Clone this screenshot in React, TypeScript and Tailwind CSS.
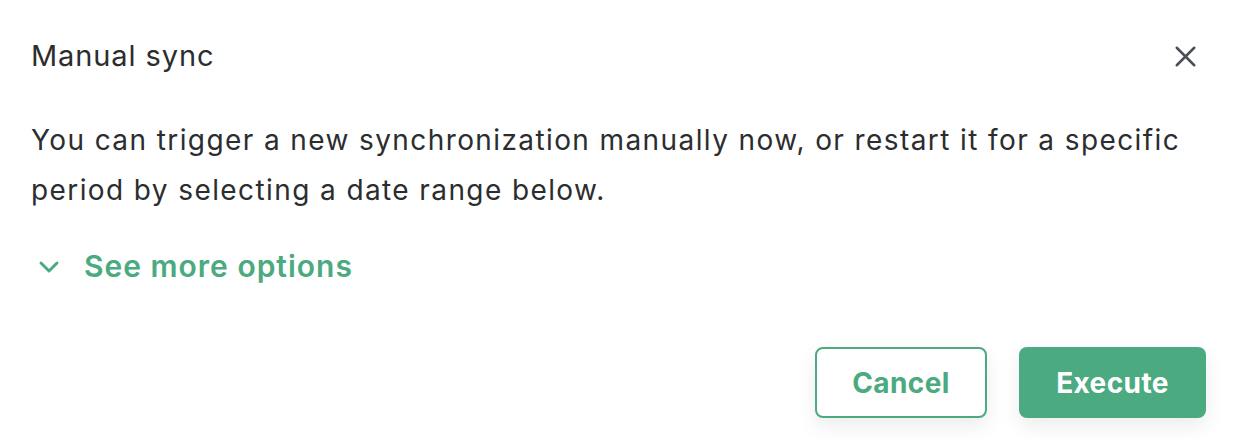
import { X, ChevronDown } from 'lucide-react';

export default function App() {
  return (
    <div className="w-[1234px] h-[448px] bg-white text-[#2b2d2f] font-['Inter',sans-serif]">
      <div className="pl-[31px] pr-[28px] pt-[36px]">
        {/* Header */}
        <div className="flex items-center justify-between h-[40px]">
          <h2 className="text-[29px] font-normal tracking-[0.9px]">Manual sync</h2>
          <button className="w-[40px] h-[40px] flex items-center justify-center text-[#4a4f55] mr-[1px]">
            <X size={35} strokeWidth={1.7} />
          </button>
        </div>

        {/* Description */}
        <p className="mt-[39px] text-[28px] leading-[50px] tracking-[1.4px] pr-[10px]">
          You can trigger a new synchronization manually now, or restart it for a specific period by selecting a date range below.
        </p>

        {/* More options */}
        <button className="mt-[29px] flex items-center gap-[19px] text-[#4caa80] text-[30px] font-semibold tracking-[1px]">
          <ChevronDown size={32} strokeWidth={2.2} className="ml-[2px]" />
          See more options
        </button>

        {/* Actions */}
        <div className="mt-[58px] flex justify-end gap-[32px]">
          <button className="w-[172px] h-[71px] rounded-[8px] border-2 border-[#4caa80] bg-white text-[#4caa80] text-[28px] font-bold tracking-[0.4px] shadow-[0_8px_20px_rgba(0,0,0,0.08)]">
            Cancel
          </button>
          <button className="w-[187px] h-[71px] rounded-[8px] bg-[#4caa80] text-white text-[28px] font-bold tracking-[0.4px] shadow-[0_8px_20px_rgba(0,0,0,0.08)]">
            Execute
          </button>
        </div>
      </div>
    </div>
  );
}
